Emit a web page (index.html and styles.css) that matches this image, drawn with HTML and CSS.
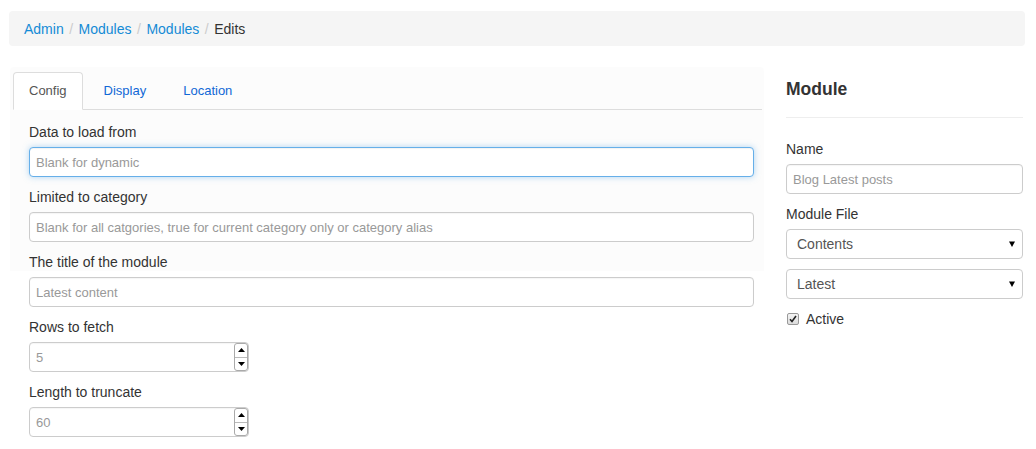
FILE: index.html
```html
<!DOCTYPE html>
<html lang="en">
<head>
<meta charset="utf-8">
<title>Edits</title>
<link rel="stylesheet" href="styles.css">
</head>
<body>
<div class="page">
  <ol class="breadcrumb">
    <li><a href="#">Admin</a></li>
    <li><a href="#">Modules</a></li>
    <li><a href="#">Modules</a></li>
    <li class="current">Edits</li>
  </ol>

  <div class="layout">
    <div class="main">
      <ul class="tabs">
        <li class="tab active"><a href="#">Config</a></li>
        <li class="tab"><a href="#">Display</a></li>
        <li class="tab"><a href="#">Location</a></li>
      </ul>
      <form class="form">
        <div class="group">
          <label class="label">Data to load from</label>
          <input class="control focus" type="text" placeholder="Blank for dynamic">
        </div>
        <div class="group">
          <label class="label">Limited to category</label>
          <input class="control" type="text" placeholder="Blank for all catgories, true for current category only or category alias">
        </div>
        <div class="group">
          <label class="label">The title of the module</label>
          <input class="control" type="text" placeholder="Latest content">
        </div>
        <div class="group">
          <label class="label">Rows to fetch</label>
          <div class="number">
            <input class="control" type="text" placeholder="5">
            <span class="spin"><span class="spin-btn"><svg width="7" height="4" viewBox="0 0 7 4"><path d="M0 4 L3.5 0 L7 4Z" fill="#000"/></svg></span><span class="spin-btn"><svg width="7" height="4" viewBox="0 0 7 4"><path d="M0 0 L3.5 4 L7 0Z" fill="#000"/></svg></span></span>
          </div>
        </div>
        <div class="group">
          <label class="label">Length to truncate</label>
          <div class="number">
            <input class="control" type="text" placeholder="60">
            <span class="spin"><span class="spin-btn"><svg width="7" height="4" viewBox="0 0 7 4"><path d="M0 4 L3.5 0 L7 4Z" fill="#000"/></svg></span><span class="spin-btn"><svg width="7" height="4" viewBox="0 0 7 4"><path d="M0 0 L3.5 4 L7 0Z" fill="#000"/></svg></span></span>
          </div>
        </div>
      </form>
    </div>

    <aside class="side">
      <h3 class="side-title">Module</h3>
      <hr class="rule">
      <div class="group">
        <label class="label">Name</label>
        <input class="control" type="text" placeholder="Blog Latest posts">
      </div>
      <label class="label">Module File</label>
      <div class="select">
        <span>Contents</span>
        <svg width="6" height="6" viewBox="0 0 6 6"><path d="M0 0.5 L6 0.5 L3 6Z" fill="#000"/></svg>
      </div>
      <div class="select">
        <span>Latest</span>
        <svg width="6" height="6" viewBox="0 0 6 6"><path d="M0 0.5 L6 0.5 L3 6Z" fill="#000"/></svg>
      </div>
      <div class="check">
        <span class="box"><svg width="10" height="10" viewBox="0 0 10 10"><path d="M2 5.2 L4 7.5 L8 2" fill="none" stroke="#222" stroke-width="1.6"/></svg></span>
        <span>Active</span>
      </div>
    </aside>
  </div>
</div>
</body>
</html>
```

FILE: styles.css
```css
* { box-sizing: border-box; }
html, body { margin: 0; padding: 0; background: #fff; }
body {
  font-family: "Liberation Sans", Arial, Helvetica, sans-serif;
  font-size: 14px;
  color: #333;
}
a { text-decoration: none; }

.page { padding: 11px 11px 0 9px; }

.breadcrumb {
  list-style: none;
  margin: 0;
  height: 35px;
  padding: 0 15px;
  background: #f5f5f5;
  border-radius: 4px;
  display: flex;
  align-items: center;
  font-size: 14px;
  line-height: 20px;
}
.breadcrumb li + li::before {
  content: "/";
  padding: 0 5.5px;
  color: #ccc;
}
.breadcrumb a { color: #148bd6; }
.breadcrumb .current { color: #333; }

.layout {
  display: flex;
  margin-top: 21px;
  align-items: flex-start;
}

.main {
  margin-left: 1px;
  width: 754px;
  padding: 5px 2px 0 3px;
  background: linear-gradient(#fcfcfc, #fcfcfc) no-repeat;
  background-size: 100% 204px;
  border-radius: 4px;
}

.tabs {
  list-style: none;
  margin: 0;
  padding: 0;
  display: flex;
  gap: 5px;
  border-bottom: 1px solid #ddd;
  font-size: 13px;
}
.tab { margin-bottom: -1px; }
.tab a {
  display: block;
  padding: 10px 15px;
  line-height: 16px;
  border: 1px solid transparent;
  border-radius: 4px 4px 0 0;
  color: #1168d6;
}
.tab.active a {
  color: #555;
  background: #fff;
  border-color: #ddd;
  border-bottom-color: #fff;
}

.form { padding: 12px 8px 0 16px; }

.group { margin-bottom: 10px; }
.label {
  display: block;
  line-height: 20px;
  margin-bottom: 5px;
  font-size: 14px;
  color: #333;
}

.control {
  display: block;
  width: 100%;
  height: 30px;
  padding: 0 6px;
  font-family: inherit;
  font-size: 13px;
  color: #555;
  background: #fff;
  border: 1px solid #ccc;
  border-radius: 4px;
  box-shadow: inset 0 1px 1px rgba(0,0,0,.04);
  outline: none;
}
.control::placeholder { color: #999; }
.control.focus {
  border-color: #66afe9;
  box-shadow: inset 0 1px 1px rgba(0,0,0,.05), 0 0 6px rgba(102,175,233,.5);
}

.number {
  position: relative;
  width: 220px;
}
.spin {
  position: absolute;
  top: 1px;
  right: 1px;
  width: 14px;
  height: 28px;
  border: 1px solid #aaa;
  border-radius: 3px;
  background: #fff;
  display: flex;
  flex-direction: column;
}
.spin-btn {
  flex: 1;
  display: flex;
  align-items: center;
  justify-content: center;
}
.spin-btn + .spin-btn { border-top: 1px solid #bbb; }
.spin-btn svg { display: block; }

.side {
  margin-left: 22px;
  width: 237px;
}
.side-title {
  margin: 12px 0 0;
  font-size: 17.5px;
  line-height: 20px;
  font-weight: bold;
  color: #333;
}
.rule {
  margin: 18px 0 21px;
  border: 0;
  border-top: 1px solid #eee;
}

.select {
  height: 30px;
  margin-bottom: 10px;
  padding: 0 7px 0 10px;
  border: 1px solid #ccc;
  border-radius: 4px;
  background: #fff;
  display: flex;
  align-items: center;
  justify-content: space-between;
  font-size: 14px;
  color: #555;
}
.select svg { display: block; }

.check {
  display: flex;
  align-items: center;
  gap: 7px;
  height: 20px;
  padding-left: 1px;
  font-size: 14px;
  color: #333;
}
.box {
  width: 12px;
  height: 12px;
  border: 1px solid #999;
  border-radius: 2px;
  background: linear-gradient(#f4f4f4, #dcdcdc);
  display: flex;
  align-items: center;
  justify-content: center;
}
.box svg { display: block; }
```
